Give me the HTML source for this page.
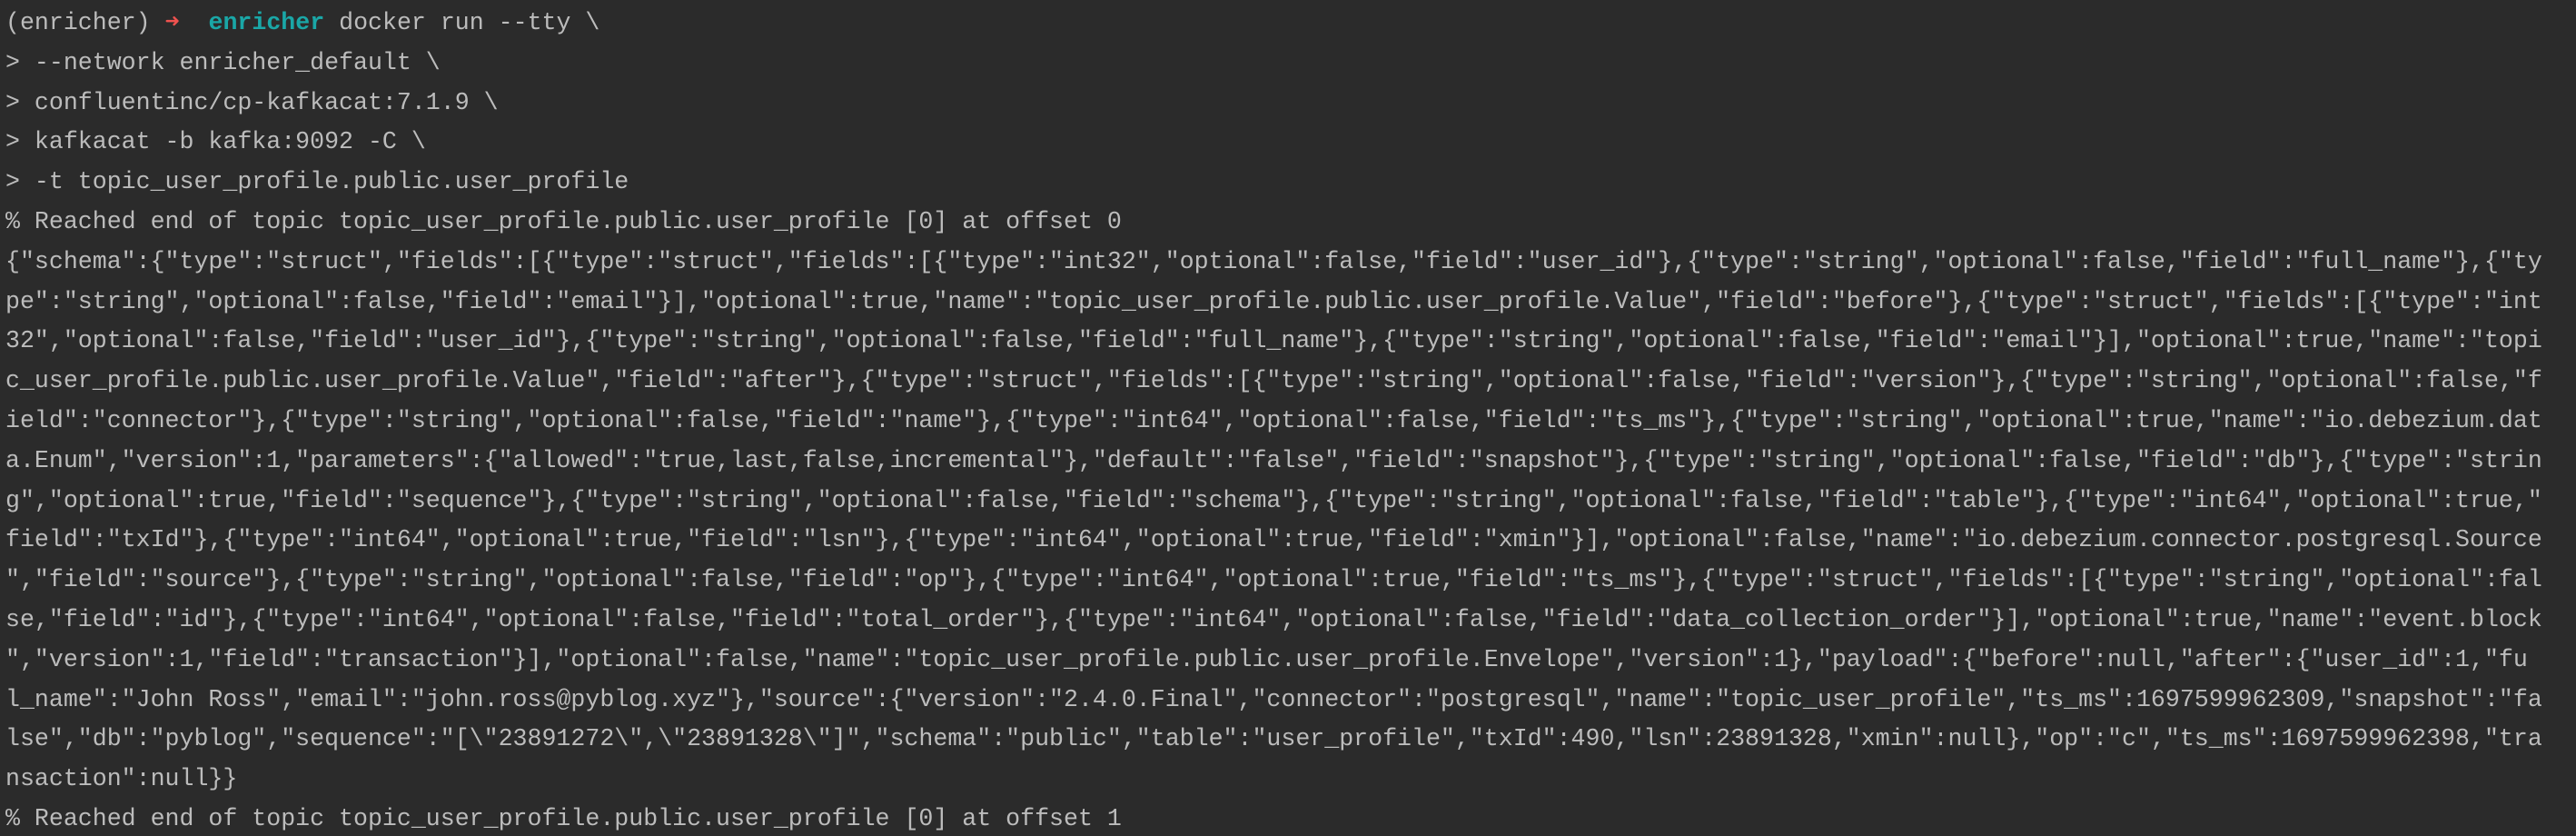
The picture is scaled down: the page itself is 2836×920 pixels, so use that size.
<!DOCTYPE html>
<html><head><meta charset="utf-8"><style>
html,body{margin:0;padding:0;background:#2b2b2b;width:2836px;height:920px;overflow:hidden}
pre{margin:0;padding:4px 0 0 6px;font-family:"Liberation Mono","DejaVu Sans Mono",monospace;font-size:26.6px;line-height:43.8px;color:#bcbcbc;white-space:pre}
.r{color:#f0524f;font-weight:bold}.c{color:#1aa7a7;font-weight:bold}
</style></head><body><pre>(enricher) <span class="r">➜</span>  <span class="c">enricher</span> docker run --tty \
&gt; --network enricher_default \
&gt; confluentinc/cp-kafkacat:7.1.9 \
&gt; kafkacat -b kafka:9092 -C \
&gt; -t topic_user_profile.public.user_profile
% Reached end of topic topic_user_profile.public.user_profile [0] at offset 0
{"schema":{"type":"struct","fields":[{"type":"struct","fields":[{"type":"int32","optional":false,"field":"user_id"},{"type":"string","optional":false,"field":"full_name"},{"ty
pe":"string","optional":false,"field":"email"}],"optional":true,"name":"topic_user_profile.public.user_profile.Value","field":"before"},{"type":"struct","fields":[{"type":"int
32","optional":false,"field":"user_id"},{"type":"string","optional":false,"field":"full_name"},{"type":"string","optional":false,"field":"email"}],"optional":true,"name":"topi
c_user_profile.public.user_profile.Value","field":"after"},{"type":"struct","fields":[{"type":"string","optional":false,"field":"version"},{"type":"string","optional":false,"f
ield":"connector"},{"type":"string","optional":false,"field":"name"},{"type":"int64","optional":false,"field":"ts_ms"},{"type":"string","optional":true,"name":"io.debezium.dat
a.Enum","version":1,"parameters":{"allowed":"true,last,false,incremental"},"default":"false","field":"snapshot"},{"type":"string","optional":false,"field":"db"},{"type":"strin
g","optional":true,"field":"sequence"},{"type":"string","optional":false,"field":"schema"},{"type":"string","optional":false,"field":"table"},{"type":"int64","optional":true,"
field":"txId"},{"type":"int64","optional":true,"field":"lsn"},{"type":"int64","optional":true,"field":"xmin"}],"optional":false,"name":"io.debezium.connector.postgresql.Source
","field":"source"},{"type":"string","optional":false,"field":"op"},{"type":"int64","optional":true,"field":"ts_ms"},{"type":"struct","fields":[{"type":"string","optional":fal
se,"field":"id"},{"type":"int64","optional":false,"field":"total_order"},{"type":"int64","optional":false,"field":"data_collection_order"}],"optional":true,"name":"event.block
","version":1,"field":"transaction"}],"optional":false,"name":"topic_user_profile.public.user_profile.Envelope","version":1},"payload":{"before":null,"after":{"user_id":1,"fu
l_name":"John Ross","email":"john.ross@pyblog.xyz"},"source":{"version":"2.4.0.Final","connector":"postgresql","name":"topic_user_profile","ts_ms":1697599962309,"snapshot":"fa
lse","db":"pyblog","sequence":"[\"23891272\",\"23891328\"]","schema":"public","table":"user_profile","txId":490,"lsn":23891328,"xmin":null},"op":"c","ts_ms":1697599962398,"tra
nsaction":null}}
% Reached end of topic topic_user_profile.public.user_profile [0] at offset 1</pre></body></html>
